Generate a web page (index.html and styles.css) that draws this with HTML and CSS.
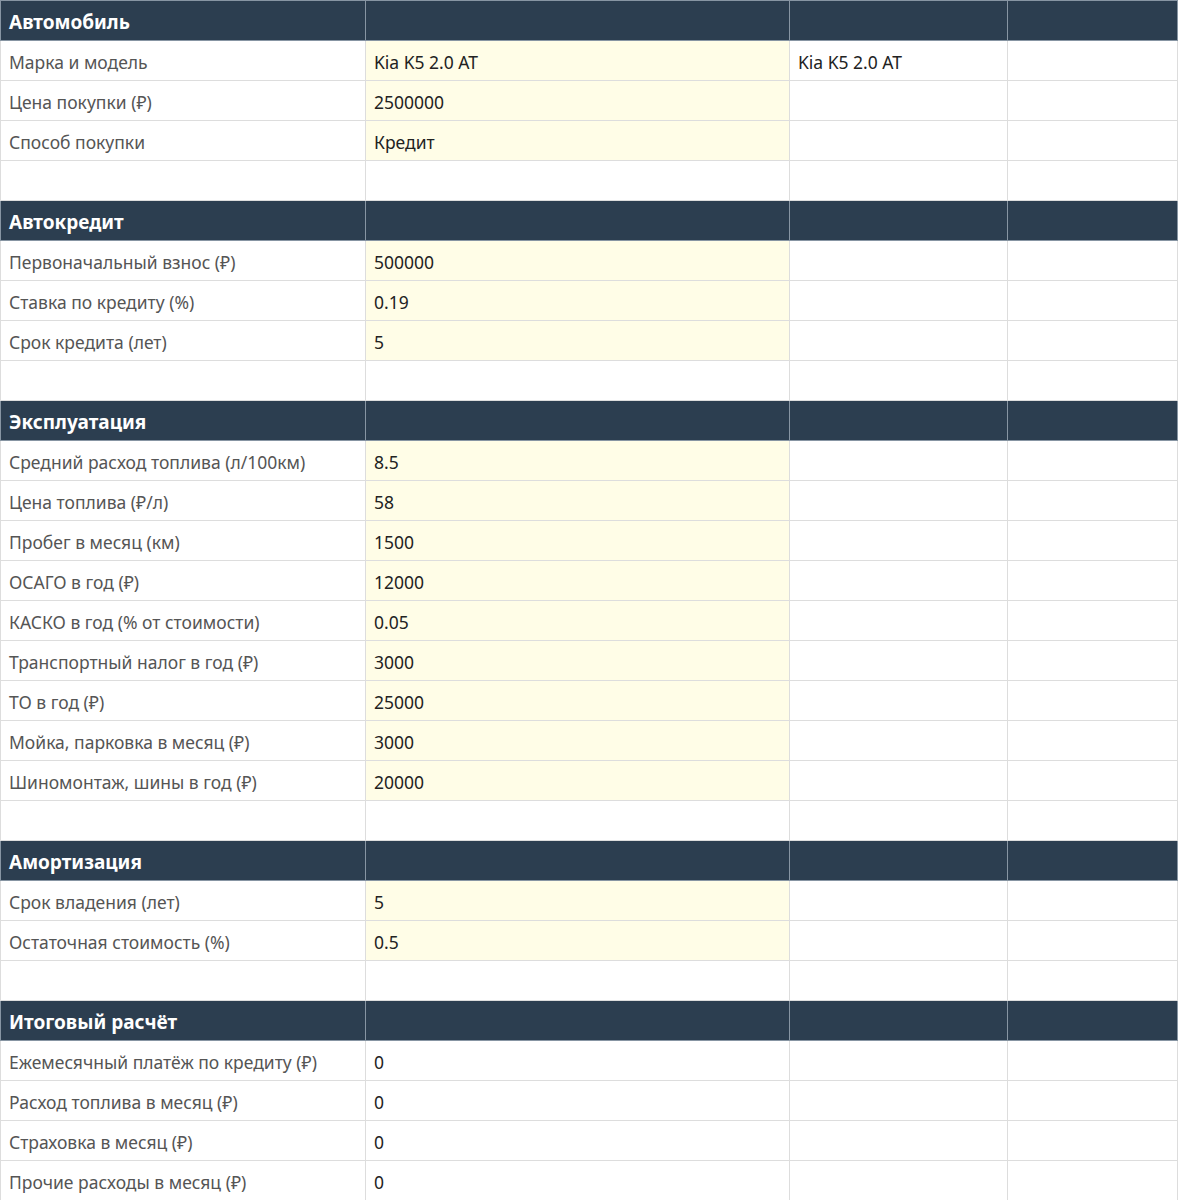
FILE: index.html
```html
<!DOCTYPE html>
<html lang="ru">
<head>
<meta charset="utf-8">
<link rel="stylesheet" href="styles.css">
</head>
<body>
<table class="sheet">
<colgroup><col class="c1"><col class="c2"><col class="c3"><col class="c4"></colgroup>
<tbody>
<tr class="head"><td>Автомобиль</td><td></td><td></td><td></td></tr>
<tr><td class="lbl">Марка и модель</td><td class="inp">Kia K5 2.0 AT</td><td class="val">Kia K5 2.0 AT</td><td></td></tr>
<tr><td class="lbl">Цена покупки (₽)</td><td class="inp">2500000</td><td></td><td></td></tr>
<tr><td class="lbl">Способ покупки</td><td class="inp">Кредит</td><td></td><td></td></tr>
<tr><td></td><td></td><td></td><td></td></tr>
<tr class="head"><td>Автокредит</td><td></td><td></td><td></td></tr>
<tr><td class="lbl">Первоначальный взнос (₽)</td><td class="inp">500000</td><td></td><td></td></tr>
<tr><td class="lbl">Ставка по кредиту (%)</td><td class="inp">0.19</td><td></td><td></td></tr>
<tr><td class="lbl">Срок кредита (лет)</td><td class="inp">5</td><td></td><td></td></tr>
<tr><td></td><td></td><td></td><td></td></tr>
<tr class="head"><td>Эксплуатация</td><td></td><td></td><td></td></tr>
<tr><td class="lbl">Средний расход топлива (л/100км)</td><td class="inp">8.5</td><td></td><td></td></tr>
<tr><td class="lbl">Цена топлива (₽/л)</td><td class="inp">58</td><td></td><td></td></tr>
<tr><td class="lbl">Пробег в месяц (км)</td><td class="inp">1500</td><td></td><td></td></tr>
<tr><td class="lbl">ОСАГО в год (₽)</td><td class="inp">12000</td><td></td><td></td></tr>
<tr><td class="lbl">КАСКО в год (% от стоимости)</td><td class="inp">0.05</td><td></td><td></td></tr>
<tr><td class="lbl">Транспортный налог в год (₽)</td><td class="inp">3000</td><td></td><td></td></tr>
<tr><td class="lbl">ТО в год (₽)</td><td class="inp">25000</td><td></td><td></td></tr>
<tr><td class="lbl">Мойка, парковка в месяц (₽)</td><td class="inp">3000</td><td></td><td></td></tr>
<tr><td class="lbl">Шиномонтаж, шины в год (₽)</td><td class="inp">20000</td><td></td><td></td></tr>
<tr><td></td><td></td><td></td><td></td></tr>
<tr class="head"><td>Амортизация</td><td></td><td></td><td></td></tr>
<tr><td class="lbl">Срок владения (лет)</td><td class="inp">5</td><td></td><td></td></tr>
<tr><td class="lbl">Остаточная стоимость (%)</td><td class="inp">0.5</td><td></td><td></td></tr>
<tr><td></td><td></td><td></td><td></td></tr>
<tr class="head"><td>Итоговый расчёт</td><td></td><td></td><td></td></tr>
<tr><td class="lbl">Ежемесячный платёж по кредиту (₽)</td><td class="val">0</td><td></td><td></td></tr>
<tr><td class="lbl">Расход топлива в месяц (₽)</td><td class="val">0</td><td></td><td></td></tr>
<tr><td class="lbl">Страховка в месяц (₽)</td><td class="val">0</td><td></td><td></td></tr>
<tr><td class="lbl">Прочие расходы в месяц (₽)</td><td class="val">0</td><td></td><td></td></tr>
</tbody>
</table>
</body>
</html>
```
FILE: styles.css
```css
html, body {
  margin: 0;
  padding: 0;
  background: #ffffff;
}
.sheet {
  border-collapse: collapse;
  table-layout: fixed;
  width: 1177px;
  font-family: "Noto Sans", "Open Sans", sans-serif;
  font-size: 17.5px;
  color: #222222;
}
.c1 { width: 365px; }
.c2 { width: 424px; }
.c3 { width: 218px; }
.c4 { width: 170px; }
.sheet td {
  border: 1px solid #dddddd;
  height: 39px;
  padding: 3px 8px 0;
  box-sizing: border-box;
  vertical-align: middle;
  white-space: nowrap;
  overflow: hidden;
  line-height: 24px;
}
.sheet tr {
  height: 40px;
}
.head td {
  background: #2c3e50;
  color: #ffffff;
  font-weight: bold;
  font-size: 19px;
  border-color: #8795a3;
}
.lbl {
  color: #555555;
}
.inp {
  background: #fffde7;
  color: #222222;
}
.val {
  color: #222222;
}
```
